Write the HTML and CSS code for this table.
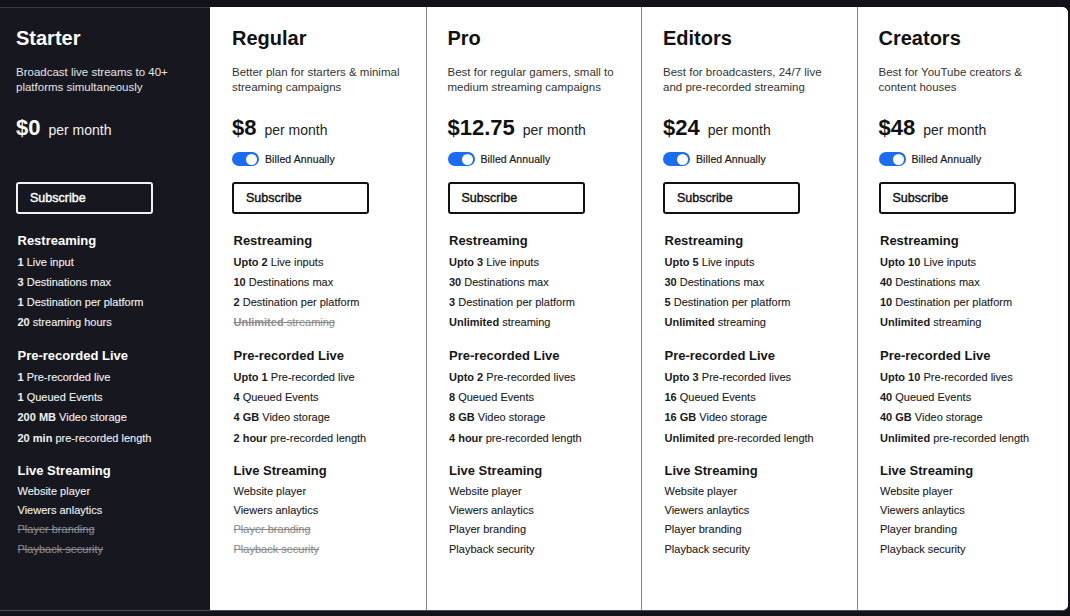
FILE: index.html
```html
<!DOCTYPE html>
<html lang="en">
<head>
<meta charset="utf-8">
<title>Pricing plans</title>
<link rel="stylesheet" href="styles.css">
</head>
<body>
<main class="plans">
  <section class="plan plan--dark">
    <h2 class="plan-title">Starter</h2>
    <p class="plan-desc">Broadcast live streams to 40+ platforms simultaneously</p>
    <div class="price"><span class="amount">$0</span><span class="period">per month</span></div>
    <div class="billing billing--empty"></div>
    <button class="subscribe">Subscribe</button>
    <div class="group">
      <h3>Restreaming</h3>
      <ul class="features">
        <li><b>1</b> Live input</li>
        <li><b>3</b> Destinations max</li>
        <li><b>1</b> Destination per platform</li>
        <li><b>20</b> streaming hours</li>
      </ul>
    </div>
    <div class="group">
      <h3>Pre-recorded Live</h3>
      <ul class="features">
        <li><b>1</b> Pre-recorded live</li>
        <li><b>1</b> Queued Events</li>
        <li><b>200 MB</b> Video storage</li>
        <li><b>20 min</b> pre-recorded length</li>
      </ul>
    </div>
    <div class="group">
      <h3>Live Streaming</h3>
      <ul class="features features--tight">
        <li>Website player</li>
        <li>Viewers anlaytics</li>
        <li class="off">Player branding</li>
        <li class="off">Playback security</li>
      </ul>
    </div>
  </section>

  <section class="plan">
    <h2 class="plan-title">Regular</h2>
    <p class="plan-desc">Better plan for starters &amp; minimal streaming campaigns</p>
    <div class="price"><span class="amount">$8</span><span class="period">per month</span></div>
    <div class="billing"><span class="toggle"></span>Billed Annually</div>
    <button class="subscribe">Subscribe</button>
    <div class="group">
      <h3>Restreaming</h3>
      <ul class="features">
        <li><b>Upto 2</b> Live inputs</li>
        <li><b>10</b> Destinations max</li>
        <li><b>2</b> Destination per platform</li>
        <li class="off"><b>Unlimited</b> streaming</li>
      </ul>
    </div>
    <div class="group">
      <h3>Pre-recorded Live</h3>
      <ul class="features">
        <li><b>Upto 1</b> Pre-recorded live</li>
        <li><b>4</b> Queued Events</li>
        <li><b>4 GB</b> Video storage</li>
        <li><b>2 hour</b> pre-recorded length</li>
      </ul>
    </div>
    <div class="group">
      <h3>Live Streaming</h3>
      <ul class="features features--tight">
        <li>Website player</li>
        <li>Viewers anlaytics</li>
        <li class="off">Player branding</li>
        <li class="off">Playback security</li>
      </ul>
    </div>
  </section>

  <section class="plan">
    <h2 class="plan-title">Pro</h2>
    <p class="plan-desc">Best for regular gamers, small to medium streaming campaigns</p>
    <div class="price"><span class="amount">$12.75</span><span class="period">per month</span></div>
    <div class="billing"><span class="toggle"></span>Billed Annually</div>
    <button class="subscribe">Subscribe</button>
    <div class="group">
      <h3>Restreaming</h3>
      <ul class="features">
        <li><b>Upto 3</b> Live inputs</li>
        <li><b>30</b> Destinations max</li>
        <li><b>3</b> Destination per platform</li>
        <li><b>Unlimited</b> streaming</li>
      </ul>
    </div>
    <div class="group">
      <h3>Pre-recorded Live</h3>
      <ul class="features">
        <li><b>Upto 2</b> Pre-recorded lives</li>
        <li><b>8</b> Queued Events</li>
        <li><b>8 GB</b> Video storage</li>
        <li><b>4 hour</b> pre-recorded length</li>
      </ul>
    </div>
    <div class="group">
      <h3>Live Streaming</h3>
      <ul class="features features--tight">
        <li>Website player</li>
        <li>Viewers anlaytics</li>
        <li>Player branding</li>
        <li>Playback security</li>
      </ul>
    </div>
  </section>

  <section class="plan">
    <h2 class="plan-title">Editors</h2>
    <p class="plan-desc">Best for broadcasters, 24/7 live and pre-recorded streaming</p>
    <div class="price"><span class="amount">$24</span><span class="period">per month</span></div>
    <div class="billing"><span class="toggle"></span>Billed Annually</div>
    <button class="subscribe">Subscribe</button>
    <div class="group">
      <h3>Restreaming</h3>
      <ul class="features">
        <li><b>Upto 5</b> Live inputs</li>
        <li><b>30</b> Destinations max</li>
        <li><b>5</b> Destination per platform</li>
        <li><b>Unlimited</b> streaming</li>
      </ul>
    </div>
    <div class="group">
      <h3>Pre-recorded Live</h3>
      <ul class="features">
        <li><b>Upto 3</b> Pre-recorded lives</li>
        <li><b>16</b> Queued Events</li>
        <li><b>16 GB</b> Video storage</li>
        <li><b>Unlimited</b> pre-recorded length</li>
      </ul>
    </div>
    <div class="group">
      <h3>Live Streaming</h3>
      <ul class="features features--tight">
        <li>Website player</li>
        <li>Viewers anlaytics</li>
        <li>Player branding</li>
        <li>Playback security</li>
      </ul>
    </div>
  </section>

  <section class="plan">
    <h2 class="plan-title">Creators</h2>
    <p class="plan-desc">Best for YouTube creators &amp; content houses</p>
    <div class="price"><span class="amount">$48</span><span class="period">per month</span></div>
    <div class="billing"><span class="toggle"></span>Billed Annually</div>
    <button class="subscribe">Subscribe</button>
    <div class="group">
      <h3>Restreaming</h3>
      <ul class="features">
        <li><b>Upto 10</b> Live inputs</li>
        <li><b>40</b> Destinations max</li>
        <li><b>10</b> Destination per platform</li>
        <li><b>Unlimited</b> streaming</li>
      </ul>
    </div>
    <div class="group">
      <h3>Pre-recorded Live</h3>
      <ul class="features">
        <li><b>Upto 10</b> Pre-recorded lives</li>
        <li><b>40</b> Queued Events</li>
        <li><b>40 GB</b> Video storage</li>
        <li><b>Unlimited</b> pre-recorded length</li>
      </ul>
    </div>
    <div class="group">
      <h3>Live Streaming</h3>
      <ul class="features features--tight">
        <li>Website player</li>
        <li>Viewers anlaytics</li>
        <li>Player branding</li>
        <li>Playback security</li>
      </ul>
    </div>
  </section>
</main>
</body>
</html>
```
FILE: styles.css
```css
* { box-sizing: border-box; }

html, body {
  margin: 0;
  padding: 0;
  background: #12131a;
}

body {
  padding-top: 7px;
  font-family: "Liberation Sans", Arial, sans-serif;
  color: #151515;
}

.plans {
  width: 1068px;
  height: 604px;
  display: grid;
  grid-template-columns: 210px 215.5px 215.5px 215.5px 1fr;
  background: #ffffff;
  border-radius: 0 6px 6px 0;
  border-bottom: 1px solid #4c4d55;
  overflow: hidden;
}

.plan {
  padding: 19px 10px 0 21px;
  background: #ffffff;
}

.plan:nth-child(2) { padding-left: 22px; }

.plan + .plan + .plan {
  border-left: 1px solid #85868a;
}

.plan--dark {
  background: #17181f;
  border-top: 1px solid #3b3c46;
  padding-top: 18px;
  padding-left: 16px;
  color: #f4f4f4;
}

.plan-title {
  margin: 0;
  font-size: 20px;
  line-height: 24px;
  font-weight: 700;
  color: #111111;
}

.plan--dark .plan-title { color: #ffffff; }

.plan-desc {
  margin: 15px 0 0;
  font-size: 11.5px;
  line-height: 15px;
  color: #333333;
  padding-right: 8px;
}

.plan--dark .plan-desc { color: #e4e4e6; }

.price {
  margin-top: 20px;
  display: flex;
  align-items: baseline;
  gap: 8px;
  height: 26px;
  line-height: 26px;
}

.amount {
  font-size: 22px;
  font-weight: 700;
  color: #111111;
}

.period {
  font-size: 14px;
  color: #222222;
}

.plan--dark .amount { color: #ffffff; }
.plan--dark .period { color: #f0f0f0; }

.billing {
  margin-top: 11px;
  height: 14px;
  display: flex;
  align-items: center;
  gap: 6px;
  font-size: 10.5px;
  letter-spacing: 0.1px;
  -webkit-text-stroke: 0.2px currentColor;
  color: #1b1b1b;
}

.billing--empty { visibility: hidden; }

.toggle {
  position: relative;
  width: 27px;
  height: 14px;
  border-radius: 7px;
  background: #1a6cf2;
  flex: none;
}

.toggle::after {
  content: "";
  position: absolute;
  top: 1.5px;
  right: 2px;
  width: 11px;
  height: 11px;
  border-radius: 50%;
  background: #ffffff;
}

.subscribe {
  display: block;
  margin-top: 15.5px;
  width: 137px;
  height: 32px;
  padding: 0 0 0 12px;
  text-align: left;
  font-family: "Liberation Sans", Arial, sans-serif;
  font-size: 12.5px;
  font-weight: 400;
  -webkit-text-stroke: 0.4px currentColor;
  color: #111111;
  background: #ffffff;
  border: 2px solid #111111;
  border-radius: 3px;
}

.plan--dark .subscribe {
  color: #ffffff;
  background: #17181f;
  border-color: #f2f2f2;
}

.group {
  padding-left: 1.5px;
  margin-top: 13px;
}

.subscribe + .group { margin-top: 17px; }

.group h3 {
  margin: 0 0 1px;
  font-size: 13px;
  line-height: 20px;
  font-weight: 700;
  color: #161616;
}

.plan--dark .group h3 { color: #ffffff; }

.features {
  list-style: none;
  margin: 0;
  padding: 0;
  font-size: 11px;
  line-height: 20.3px;
  color: #1a1a1a;
  white-space: nowrap;
  -webkit-text-stroke: 0.1px currentColor;
}

.features--tight { line-height: 19.3px; }

.features b { font-weight: 700; -webkit-text-stroke: 0; }

.plan--dark .features { color: #f2f2f2; }

.features .off {
  color: #8c8c8c;
  text-decoration: line-through;
}

.plan--dark .features .off { color: #8a8a8e; }
```
